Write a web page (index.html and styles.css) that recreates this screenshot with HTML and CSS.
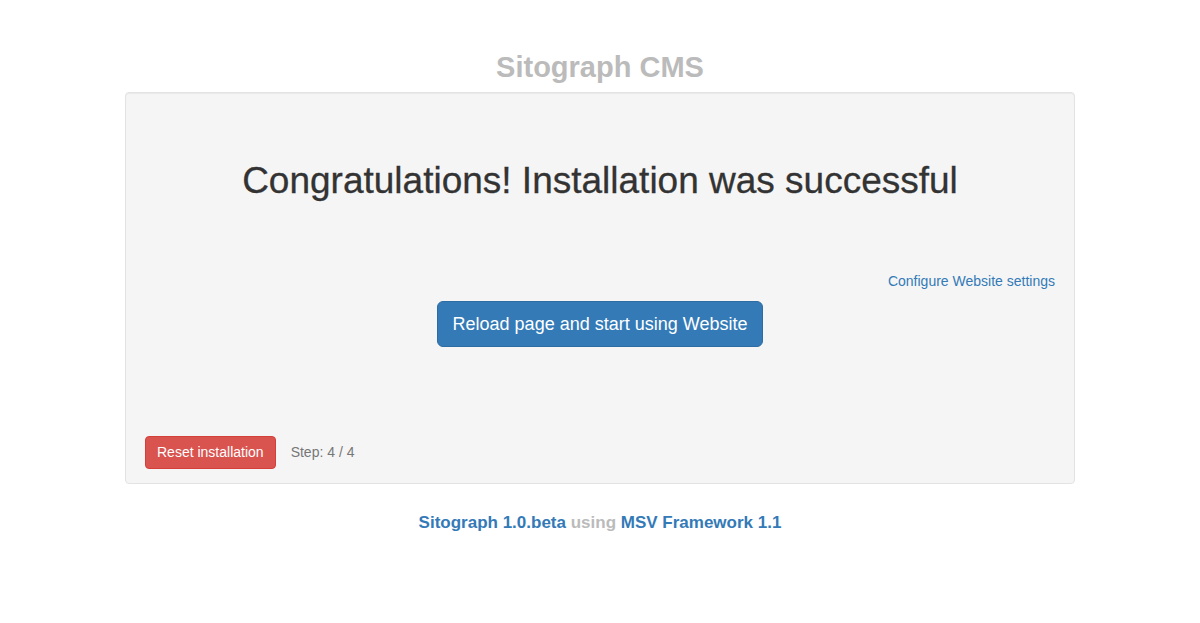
FILE: index.html
```html
<!DOCTYPE html>
<html>
<head>
<meta charset="utf-8">
<title>Sitograph CMS</title>
<link rel="stylesheet" href="styles.css">
</head>
<body>
<div class="container">
  <h2 class="brand">Sitograph CMS</h2>
  <div class="well">
    <h1 class="title">Congratulations! Installation was successful</h1>
    <div class="config-row"><a href="#" class="link">Configure Website settings</a></div>
    <div class="center-row"><a href="#" class="btn btn-primary btn-lg">Reload page and start using Website</a></div>
    <div class="bottom-row">
      <a href="#" class="btn btn-danger">Reset installation</a>
      <span class="step">Step: 4 / 4</span>
    </div>
  </div>
  <p class="footer"><a href="#" class="flink">Sitograph 1.0.beta</a> <span class="using">using</span> <a href="#" class="flink">MSV Framework 1.1</a></p>
</div>
</body>
</html>
```
FILE: styles.css
```css
* { box-sizing: border-box; }
html, body { margin: 0; padding: 0; background: #fff; }
body { font-family: "Liberation Sans", Arial, sans-serif; font-size: 14px; line-height: 1.42857; color: #333; }
.container { width: 950px; margin: 0 auto; }
.brand { margin: 0; padding-top: 49px; height: 92px; text-align: center; font-size: 29px; font-weight: bold; color: #bbb; line-height: 36px; }
.well { background: #f5f5f5; border: 1px solid #e3e3e3; border-radius: 4px; box-shadow: inset 0 1px 1px rgba(0,0,0,.05); padding: 19px 19px 14px; height: 392px; display: flex; flex-direction: column; }
.title { margin: 0; padding-top: 46px; text-align: center; font-size: 37px; font-weight: normal; line-height: 46px; color: #333; -webkit-text-stroke: 0.3px #333; }
.config-row { margin-top: 67px; text-align: right; line-height: 20px; }
a { text-decoration: none; }
.link { color: #337ab7; font-size: 14px; }
.center-row { margin-top: 10px; text-align: center; }
.btn { display: inline-block; border: 1px solid transparent; white-space: nowrap; }
.btn-lg { padding: 10px 15px; font-size: 18px; line-height: 24px; border-radius: 6px; }
.btn-primary { background: #337ab7; border-color: #2e6da4; color: #fff; }
.bottom-row { margin-top: auto; display: flex; align-items: center; gap: 15px; }
.btn-danger { background: #d9534f; border-color: #d43f3a; color: #fff; padding: 6px 11px; font-size: 14px; line-height: 19px; border-radius: 4px; }
.step { color: #777; font-size: 14px; }
.footer { margin: 0; padding-top: 27px; text-align: center; font-size: 17px; font-weight: bold; line-height: 24px; }
.flink { color: #337ab7; }
.using { color: #bbb; }
```
